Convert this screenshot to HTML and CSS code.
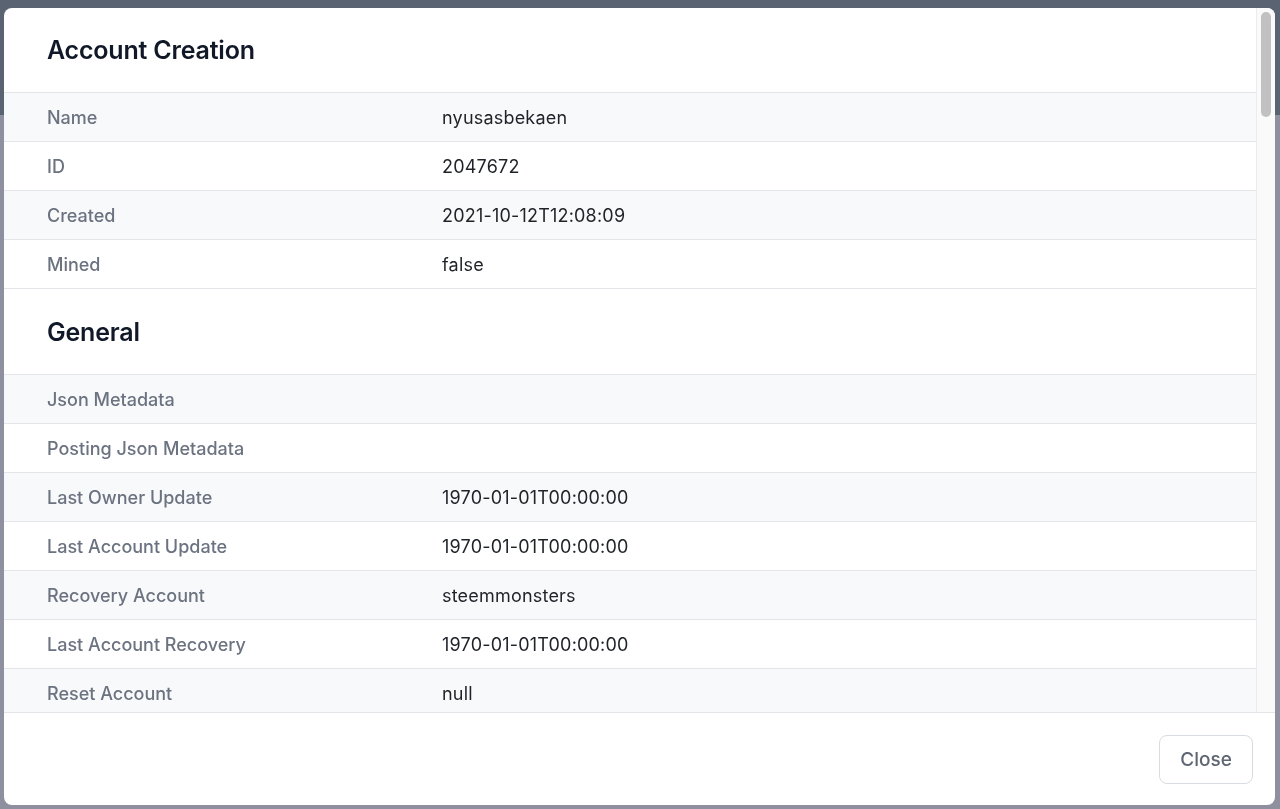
FILE: index.html
```html
<!DOCTYPE html>
<html lang="en">
<head>
<meta charset="utf-8">
<title>Account Creation</title>
<link rel="stylesheet" href="styles.css">
</head>
<body>
<div class="page">
  <div class="page-top"></div>
  <div class="page-rest"></div>
</div>
<div class="modal">
  <div class="modal-scroll">
    <div class="modal-content">
      <section class="section">
        <h2 class="section-title">Account Creation</h2>
        <div class="table">
          <div class="row striped"><div class="label">Name</div><div class="value">nyusasbekaen</div></div>
          <div class="row"><div class="label">ID</div><div class="value">2047672</div></div>
          <div class="row striped"><div class="label">Created</div><div class="value">2021-10-12T12:08:09</div></div>
          <div class="row"><div class="label">Mined</div><div class="value">false</div></div>
        </div>
      </section>
      <section class="section">
        <h2 class="section-title second">General</h2>
        <div class="table">
          <div class="row striped"><div class="label">Json Metadata</div><div class="value"></div></div>
          <div class="row"><div class="label">Posting Json Metadata</div><div class="value"></div></div>
          <div class="row striped"><div class="label">Last Owner Update</div><div class="value">1970-01-01T00:00:00</div></div>
          <div class="row"><div class="label">Last Account Update</div><div class="value">1970-01-01T00:00:00</div></div>
          <div class="row striped"><div class="label">Recovery Account</div><div class="value">steemmonsters</div></div>
          <div class="row"><div class="label">Last Account Recovery</div><div class="value">1970-01-01T00:00:00</div></div>
          <div class="row striped"><div class="label">Reset Account</div><div class="value">null</div></div>
        </div>
      </section>
    </div>
    <div class="scrollbar"><div class="thumb"></div></div>
  </div>
  <div class="modal-footer">
    <button class="btn" type="button">Close</button>
  </div>
</div>
</body>
</html>
```

FILE: styles.css
```css
html, body {
  margin: 0;
  padding: 0;
  height: 100%;
  overflow: hidden;
}
body {
  font-family: Inter, "Noto Sans", "Liberation Sans", sans-serif;
  background: #8f909f;
}
.page {
  height: 100%;
  display: flex;
  flex-direction: column;
}
.page-top {
  height: 115px;
  background: #5a6372;
}
.page-rest {
  flex: 1;
  background: #8f909f;
}
.modal {
  position: fixed;
  left: 4px;
  top: 8px;
  width: 1271px;
  height: 797px;
  background: #fff;
  border-radius: 8px;
  overflow: hidden;
  display: flex;
  flex-direction: column;
}
.modal-scroll {
  flex: 1;
  min-height: 0;
  display: flex;
}
.modal-content {
  flex: 1;
  min-width: 0;
  overflow: hidden;
}
.scrollbar {
  width: 19px;
  flex: none;
  box-sizing: border-box;
  background: #fafafa;
  border-left: 1px solid #ececec;
  padding: 4px 4px 0 4px;
}
.thumb {
  height: 105px;
  background: #c1c1c1;
  border-radius: 6px;
}
.section-title {
  margin: 0;
  height: 84px;
  box-sizing: border-box;
  padding: 0 43px;
  display: flex;
  align-items: center;
  font-size: 25px;
  font-weight: 600;
  color: #111827;
  letter-spacing: -0.2px;
}
.section-title.second {
  height: 85px;
}
.table {
  border-top: 1px solid #e3e5e8;
}
.row {
  display: grid;
  grid-template-columns: 438px 1fr;
  height: 49px;
  box-sizing: border-box;
  border-bottom: 1px solid #e3e5e8;
  align-items: center;
  font-size: 18px;
}
.row.striped {
  background: #f8f9fa;
}
.label {
  padding-left: 43px;
  color: #6b7280;
  font-weight: 500;
}
.value {
  color: #1f2328;
  letter-spacing: 0.2px;
}
.modal-footer {
  height: 93px;
  box-sizing: border-box;
  border-top: 1px solid #e3e5e8;
  display: flex;
  justify-content: flex-end;
  align-items: center;
  padding-right: 22px;
}
.btn {
  width: 94px;
  height: 49px;
  border: 1px solid #d8dbe0;
  border-radius: 8px;
  background: #fff;
  color: #5f6673;
  font-family: inherit;
  font-size: 19px;
  font-weight: 500;
}
```
